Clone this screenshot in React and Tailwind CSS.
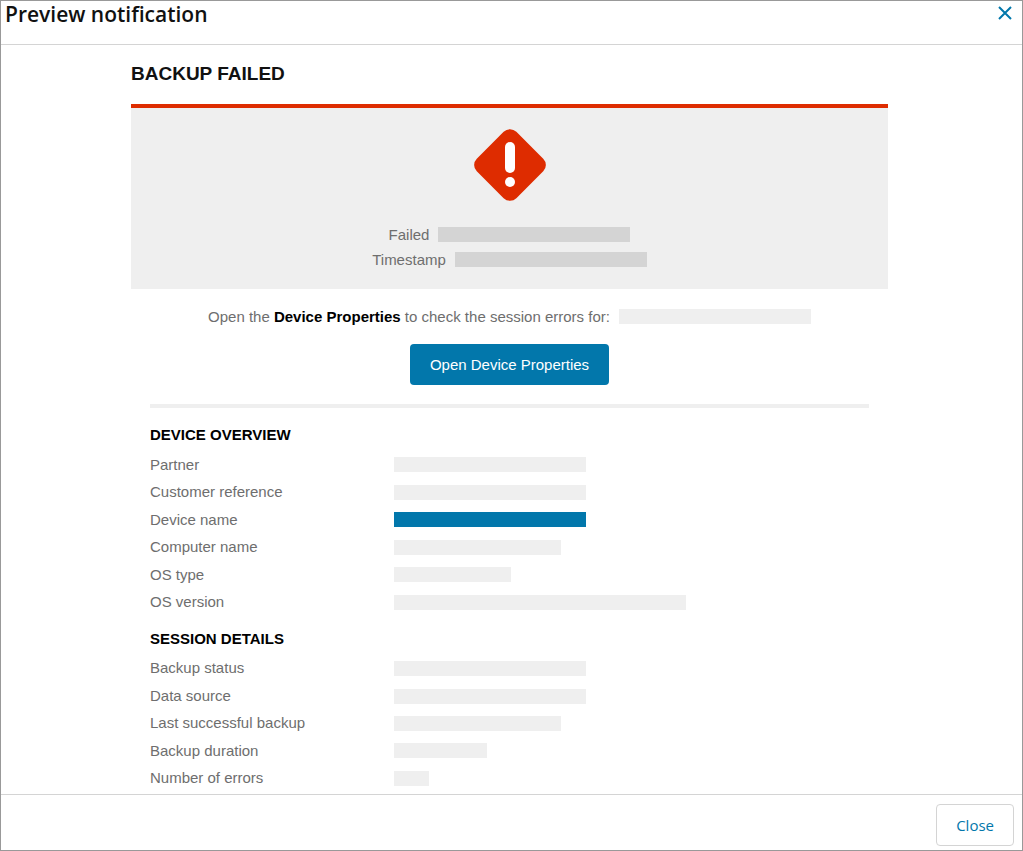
import clsx from 'clsx'

const deviceOverview = [
  { label: 'Partner', bar: 'w-[192px] bg-[#efefef]' },
  { label: 'Customer reference', bar: 'w-[192px] bg-[#efefef]' },
  { label: 'Device name', bar: 'w-[192px] bg-[#0277ab]' },
  { label: 'Computer name', bar: 'w-[167px] bg-[#efefef]' },
  { label: 'OS type', bar: 'w-[117px] bg-[#efefef]' },
  { label: 'OS version', bar: 'w-[292px] bg-[#efefef]' },
]

const sessionDetails = [
  { label: 'Backup status', bar: 'w-[192px] bg-[#efefef]' },
  { label: 'Data source', bar: 'w-[192px] bg-[#efefef]' },
  { label: 'Last successful backup', bar: 'w-[167px] bg-[#efefef]' },
  { label: 'Backup duration', bar: 'w-[93px] bg-[#efefef]' },
  { label: 'Number of errors', bar: 'w-[35px] bg-[#efefef]' },
]

// Placeholder for a value that is filled in when the email is sent
function Bar({ className }) {
  return <span className={clsx('block h-[15px]', className)} />
}

function FailedIcon() {
  return (
    <svg width="76" height="76" viewBox="0 0 76 76" aria-hidden="true">
      <rect x="10" y="10" width="56" height="56" rx="9" fill="#de2c00" transform="rotate(45 38 38)" />
      <rect x="33" y="15" width="10" height="31" rx="5" fill="#fff" />
      <circle cx="38" cy="55" r="5" fill="#fff" />
    </svg>
  )
}

function DetailsTable({ title, rows, className }) {
  return (
    <section>
      <h3 className="mb-1 font-bold leading-6 text-black">{title}</h3>
      <table className={clsx('w-full', className)}>
        <tbody>
          {rows.map((row) => (
            <tr key={row.label}>
              <th scope="row" className="w-[244px] p-0 text-left align-middle font-normal">{row.label}</th>
              <td className="p-0 align-middle"><Bar className={row.bar} /></td>
            </tr>
          ))}
        </tbody>
      </table>
    </section>
  )
}

function App() {
  return (
    <div
      role="dialog"
      aria-labelledby="dialog-title"
      className="flex min-h-screen flex-col border border-[#999] bg-white font-['Open_Sans','Noto_Sans',sans-serif]"
    >
      <header className="flex h-11 items-start justify-between border-b border-[#d4d4d4] pl-1 pr-[5px]">
        <h1 id="dialog-title" className="text-[21px] font-semibold leading-[26px] text-[#111]">
          Preview notification
        </h1>
        <button type="button" aria-label="Close dialog" className="flex size-6 items-center justify-center text-[#0277ab]">
          <svg width="14" height="14" viewBox="0 0 14 14" fill="none" stroke="currentColor" strokeWidth="2">
            <path d="M1 1l12 12M13 1L1 13" />
          </svg>
        </button>
      </header>

      <main className="flex-1 pb-0.5 pr-1 pt-[17px] font-['Liberation_Sans',Arial,sans-serif] text-[15px] text-[#6e6e6e]">
        <div className="mx-auto max-w-[757px]">
          <h2 className="text-[19px] font-bold leading-6 text-[#111]">BACKUP FAILED</h2>

          <div className="mt-[18px] flex flex-col items-center border-t-4 border-[#de2c00] bg-[#efefef] pb-[17px] pt-[19px] leading-[25px]">
            <FailedIcon />
            <div className="mt-[19px] flex items-center gap-[9px]">
              <span>Failed</span>
              <Bar className="w-[192px] bg-[#d4d4d4]" />
            </div>
            <div className="flex items-center gap-[9px]">
              <span>Timestamp</span>
              <Bar className="w-[192px] bg-[#d4d4d4]" />
            </div>
          </div>

          <div className="mt-[15px] flex items-center justify-center gap-[9px] leading-[25px]">
            <p>
              Open the <strong className="font-bold text-black">Device Properties</strong> to check the session errors for:
            </p>
            <Bar className="w-[192px] bg-[#efefef]" />
          </div>

          <div className="mt-[15px] flex justify-center">
            <button type="button" className="rounded bg-[#0277ab] px-5 py-2 leading-[25px] text-white">
              Open Device Properties
            </button>
          </div>

          <div className="mx-[19px] mt-[19px] border-t-4 border-[#efefef] pt-[15px]">
            <div className="flex flex-col gap-[11px]">
              <DetailsTable title="DEVICE OVERVIEW" rows={deviceOverview} className="h-[165px]" />
              <DetailsTable title="SESSION DETAILS" rows={sessionDetails} className="h-[137px]" />
            </div>
          </div>
        </div>
      </main>

      <footer className="flex justify-end border-t border-[#d4d4d4] pb-1 pl-2 pr-2 pt-[9px]">
        <button
          type="button"
          className="rounded border border-[#d4d4d4] px-[19px] py-2 text-[15px] leading-6 text-[#0277ab]"
        >
          Close
        </button>
      </footer>
    </div>
  )
}

export default App
